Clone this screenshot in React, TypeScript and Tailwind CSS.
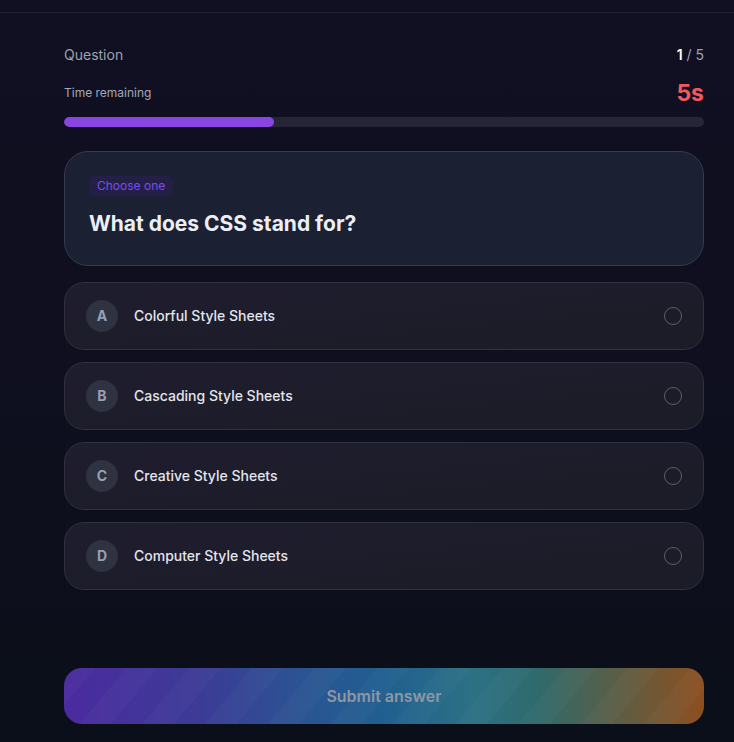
import { useState } from "react";

const options = [
  { key: "A", label: "Colorful Style Sheets" },
  { key: "B", label: "Cascading Style Sheets" },
  { key: "C", label: "Creative Style Sheets" },
  { key: "D", label: "Computer Style Sheets" },
];

function Option({ letter, label, selected, onPick }: { letter: string; label: string; selected: boolean; onPick: () => void }) {
  return (
    <button
      onClick={onPick}
      className="flex h-[68px] w-full items-center gap-4 rounded-[20px] border border-[#30313f] bg-linear-to-br from-[#1f1d2e] to-[#1b1c27] px-[21px] text-left"
    >
      <span className="flex h-8 w-8 shrink-0 items-center justify-center rounded-full bg-[#2e3241] text-sm font-bold text-[#97a0b3]">
        {letter}
      </span>
      <span className="flex-1 text-sm font-medium text-[#e3e5ec]">{label}</span>
      <span className={"h-[18px] w-[18px] rounded-full border-[1.5px] " + (selected ? "border-violet-500" : "border-[#5b5e6c]")} />
    </button>
  );
}

export default function App() {
  const [picked, setPicked] = useState<string | null>(null);
  const elapsed = 1 / 3;

  return (
    <div className="min-h-[742px] bg-linear-to-b from-[#110f22] via-[#0f0f1f] to-[#0b0f19] font-['Inter',sans-serif]">
      <div className="h-[13px] border-b border-[#22222f]" />
      <main className="pt-8 pr-[30px] pb-[18px] pl-16">
        <div className="flex items-center justify-between text-sm leading-5">
          <span className="text-[#9ca3af]">Question</span>
          <span className="text-[#9ca3af]">
            <span className="font-semibold text-white">1</span> / 5
          </span>
        </div>
        <div className="mt-3 flex h-8 items-center justify-between">
          <span className="text-xs text-[#a3a9b6]">Time remaining</span>
          <span className="text-[23px] font-bold text-[#f05a5a]">5s</span>
        </div>
        <div className="mt-2 h-2.5 w-full overflow-hidden rounded-full bg-[#262538]">
          <div className="h-full rounded-full bg-[#8845e2]" style={{ width: `${elapsed * 100 - 0.5}%` }} />
        </div>

        <section className="mt-6 flex flex-col items-start rounded-3xl border border-[#373a4c] bg-[#1b2033] px-6 pt-6 pb-[27px]">
          <span className="flex h-5 items-center rounded-md bg-[#241f47] px-2 text-xs text-[#7c4de9]">Choose one</span>
          <h1 className="mt-[14px] text-[21px] leading-7 font-bold text-[#eceef3]">What does CSS stand for?</h1>
        </section>

        <div className="mt-4 flex flex-col gap-3">
          {options.map((o) => (
            <Option key={o.key} letter={o.key} label={o.label} selected={picked === o.key} onPick={() => setPicked(o.key)} />
          ))}
        </div>

        <button
          disabled={!picked}
          className="relative mt-[78px] flex h-14 w-full items-center justify-center overflow-hidden rounded-[18px] bg-[linear-gradient(90deg,#4b2a9f_0%,#3b3c96_22%,#2a5592_38%,#205f90_50%,#2c7184_64%,#2f6a6c_74%,#5a5e46_86%,#8d4f20_100%)] text-base font-semibold text-[#8e97a6]"
        >
          <span className="absolute inset-0 bg-[repeating-linear-gradient(130deg,rgba(255,255,255,0.022)_0px,rgba(255,255,255,0.022)_24px,transparent_24px,transparent_48px)]" />
          <span className="relative">Submit answer</span>
        </button>
      </main>
    </div>
  );
}
